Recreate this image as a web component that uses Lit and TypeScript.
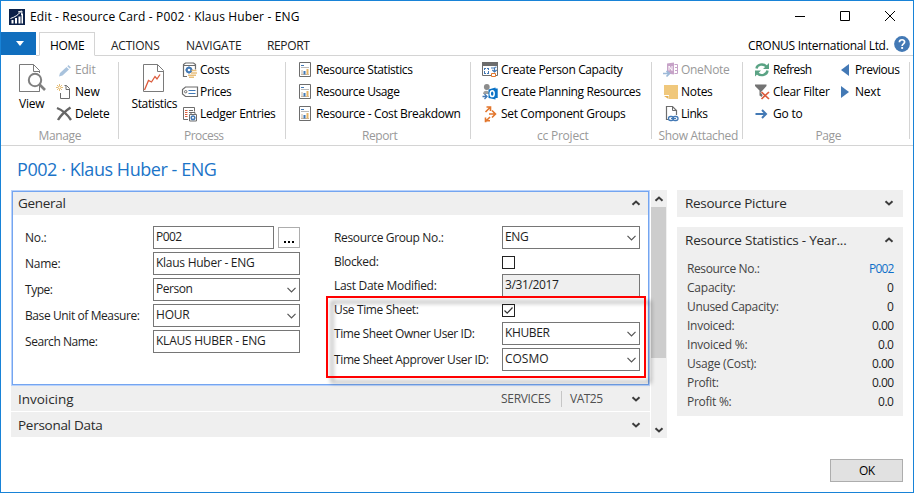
import { LitElement, html, css, svg, nothing } from "lit";
import { customElement, property } from "lit/decorators.js";

/** Single-line text set to a given advance width by adjusting its tracking. */
@customElement("fit-text")
class FitText extends LitElement {
  @property({ type: Number }) w = 0;
  @property() text = "";
  static styles = css`
    :host { display: block; flex: none; white-space: pre; box-sizing: border-box; padding-left: 1px; }
    span { display: inline-block; }
  `;
  render() {
    return html`<span>${this.text}</span>`;
  }
  updated() {
    const s = this.renderRoot.querySelector("span") as HTMLElement;
    s.style.letterSpacing = "0px";
    const natural = s.getBoundingClientRect().width;
    s.style.letterSpacing = `${(this.w - 1.5 - natural) / this.text.length}px`;
    this.style.width = `${this.w}px`;
  }
}

const t = (text: string, w: number, cls = "") =>
  html`<fit-text class=${cls} .text=${text} .w=${w}></fit-text>`;

const G = "#6d6d6d";
const B = "#4379b5";

const report = svg`
  <path d="M1.500 .5h11v14h-11z" fill="#fff" stroke="${G}"/>
  <path d="M3 3.500h3" stroke="#4379b5"/><path d="M3 5.500h8" stroke="#bbb"/>
  <path d="M4 8v4.500M3 12.500h8" stroke="#c9b6a0"/>
  <path d="M5.500 9h2v3.500h-2z" fill="${B}"/>
  <path d="M8.500 7h2v5.500h-2z" fill="#e6b566"/>`;

const icons: Record<string, unknown> = {
  pencil: svg`<path d="M2 14.500l1-3.500 6.500-6 2.500 2.500-6.500 6z" fill="#a9c3dd"/><path d="M10.300 4.200l1.200-1.200 2.400 2.400-1.200 1.200z" fill="#a9c3dd"/>`,
  fresh: svg`<path d="M3.500 9v5.500h9V4.500l-3-3H7.500" fill="none" stroke="${G}"/><path d="M9 1.500v4h3.500" fill="none" stroke="${G}"/>
    <path d="M2.500 0v7M-1 3.500h7M0 1l5 5M5 1L0 6" stroke="#e3b566" stroke-width=".9"/><circle cx="2.500" cy="3.500" r="1.100" fill="#fff"/>`,
  cross: svg`<path d="M0 2C4 3.500 10 8 14 14" fill="none" stroke="#666" stroke-width="2.400"/><path d="M13.500 1.500C9 4.500 4 9 1 14" fill="none" stroke="#666" stroke-width="2.400"/>`,
  costs: svg`<path d="M5 14.500H1.500v-12l2-1.500h8l2 1.500v5" fill="none" stroke="${G}" stroke-width="1.200"/><path d="M2 3.500h11" fill="none" stroke="${G}"/>
    <circle cx="7" cy="8" r="2.300" fill="none" stroke="${B}" stroke-width="2"/><path d="M7 4.500v1.500M7 10v1.500M3.500 8H5M9 8h1.500" stroke="${B}" stroke-width="1.500"/>
    <path d="M9.500 8.500h5M9 11h6M6 13.300h8M7 15.300h5" stroke="#e9bf7c" stroke-width="1.400"/>`,
  prices: svg`<path d="M3.500 3h12v9.500h-12L.5 10V5.500z" fill="#fff" stroke="${G}" stroke-width="1.200"/><circle cx="3.700" cy="7.700" r="1.200" fill="none" stroke="${G}"/>
    <path d="M6.500 6.500h7M6.500 9.500h7" stroke="${B}" stroke-width="1.200"/>`,
  ledger: svg`<path d="M6 13.500H1.500v-12h11v4" fill="none" stroke="${G}"/><path d="M3 4.500h2.500M3 6.500h2.500M3 8.500h2.500M3 10.500h2.500" stroke="#d9603f" stroke-width="1.200"/>
    <path d="M7 4.500h4M7 6.500h3" stroke="${G}"/><path d="M7.500 8.500h7v6.500h-7z" fill="#fff" stroke="${G}"/><path d="M9 8V6.500h4V8" fill="none" stroke="${G}"/>
    <circle cx="11" cy="11.800" r="1.800" fill="none" stroke="${B}" stroke-width="1.500"/>`,
  report,
  capacity: svg`<path d="M-.5 1.500h15v12h-15z" fill="#fff" stroke="${G}"/><path d="M-1 0h16v4H-1z" fill="${G}"/>
    <path d="M1 6.500h5M1 11.500h5M1.500 6v6M5.500 6v6" stroke="${B}" stroke-dasharray="2 1"/><path d="M8 6h3.500v4M9.300 8l2.200 2 2.200-2M11.500 5.500l2-.5" fill="none" stroke="${B}" stroke-width="1.200"/>
    <path d="M8.500 11.500h4v3h-4z" fill="#fff" stroke="#e2762c"/>`,
  planning: svg`<circle cx="3.800" cy="3" r="2.900" fill="#8c8c8c"/><path d="M0 10c0-4.500 6-4.500 7 0z" fill="#a0a0a0"/><path d="M-.5 12.500h4M1.500 10l2.500 2.500L1.500 15" fill="none" stroke="${B}" stroke-width="1.300"/>
    <path d="M5.500 5.500l7-2v12l-7-1.500z" fill="#0a72c6"/><path d="M11 4.500h3.700v9.500H11z" fill="#0a72c6"/><ellipse cx="9.200" cy="9.700" rx="2" ry="2.900" fill="none" stroke="#fff" stroke-width="1.500"/>`,
  groups: svg`<path d="M3.500 1h4v4M7 1.500L2.500 6M3.500 15.500h-1v-4M3 15l4-4M2.500 14.700h4.500M6 8h6M9 4.500L12.500 8 9 11.500" fill="none" stroke="#e2762c" stroke-width="1.600"/>`,
  onenote: svg`<path d="M4 1.500l7-1v12l-7-1z" fill="#c7a3c8"/><path d="M11.500 2.500h3v9h-3" fill="none" stroke="#c7a3c8"/><path d="M12 5.500h3M12 8.500h3" stroke="#c7a3c8"/>
    <path d="M6 8.500V4L9 8.500V4" fill="none" stroke="#fff"/><path d="M0 11.500h6M3.500 9l3 2.500-3 3" fill="none" stroke="#9db9d8" stroke-width="1.700"/>`,
  notes: svg`<path d="M1 1h14v14H6V11H1z" fill="#f0c87c"/><path d="M1 12h4.500v3z" fill="#e3b155"/>`,
  links: svg`<path d="M5 13.500H3.500v-13h6l4 4V9" fill="none" stroke="${G}" stroke-width="1.200"/><path d="M9.500 .5v4h4" fill="none" stroke="${G}"/>
    <rect x="5.500" y="10.500" width="5" height="4" rx="2" fill="none" stroke="${B}" stroke-width="1.300"/><rect x="10" y="10.500" width="5" height="4" rx="2" fill="none" stroke="${B}" stroke-width="1.300"/><path d="M8 12.500h5" stroke="${B}"/>`,
  refresh: svg`<path d="M1.500 6.500C2 2.500 8 1 11.500 4.500M12.500 8.500C12 13 6 14.500 2.500 11.500" fill="none" stroke="#5aa384" stroke-width="2.400"/>
    <path d="M14 1v6H8zM0 14.500v-6h6z" fill="#5aa384"/>`,
  filter: svg`<path d="M0 .5h11.500V2L7.500 6.500v7l-3-2v-5L0 2z" fill="#737373"/><path d="M6.500 7.500l7.500 7.500M14 7.500L6.500 15" stroke="#fff" stroke-width="3"/><path d="M6.500 8l7.500 7M14 8l-7.500 7" stroke="#dc5b3c" stroke-width="1.700"/>`,
  goto: svg`<path d="M.5 8h10M7 4l4 4-4 4" fill="none" stroke="${B}" stroke-width="2"/>`,
  prev: svg`<path d="M12 2v12L4 8z" fill="${B}"/>`,
  next: svg`<path d="M4 2v12l8-6z" fill="${B}"/>`,
};

const icon = (name: string) =>
  html`<svg class="ico" width="16" height="16" viewBox="0 0 16 16">${icons[name]}</svg>`;

const item = (ic: string, label: string, w: number, off = false) =>
  html`<div class="item ${off ? "off" : ""}">${icon(ic)}${t(label, w + 2)}</div>`;

const up = html`<svg class="arr" width="8" height="6" viewBox="0 0 8 6"><path d="M.5 4.800L4 1.500 7.500 4.800" fill="none" stroke="#3c3c3c" stroke-width="2"/></svg>`;
const down = html`<svg class="arr" width="8" height="6" viewBox="0 0 8 6"><path d="M.5 1.200L4 4.500 7.500 1.200" fill="none" stroke="#3c3c3c" stroke-width="2"/></svg>`;
const chev = html`<svg width="9" height="6" viewBox="0 0 9 6"><path d="M.5 .8l4 4 4-4" fill="none" stroke="#555" stroke-width="1.200"/></svg>`;

const field = (kind: string, label: string, lw: number, value: string, vw: number) => html`
  <div class="row ${kind}">
    <div class="lab">${t(label, lw + 2)}</div>
    ${kind.includes("check")
      ? html`<div class="box">${value
          ? html`<svg width="11" height="11" viewBox="0 0 11 11"><path d="M1.500 5.500L4.200 8.200 9.500 2.500" fill="none" stroke="#333" stroke-width="1.200"/></svg>`
          : nothing}</div>`
      : html`<div class="inp">${t(value, vw + 2)}${kind.includes("combo") ? chev : nothing}</div>`}
    ${kind.includes("assist") ? html`<div class="dots"><i></i><i></i><i></i></div>` : nothing}
  </div>`;

const stats: [string, number, string, number][] = [
  ["Resource No.:", 72, "P002", 24],
  ["Capacity:", 48, "0", 6],
  ["Unused Capacity:", 91, "0", 6],
  ["Invoiced:", 47, "0.00", 21],
  ["Invoiced %:", 60, "0.0", 15],
  ["Usage (Cost):", 69, "0.00", 21],
  ["Profit:", 31, "0.00", 21],
  ["Profit %:", 44, "0.0", 15],
];

@customElement("app-root")
class AppRoot extends LitElement {
  static styles = css`
    :host { display: block; font: 12px/16px "Open Sans", "Noto Sans", sans-serif; color: #000; }
    * { box-sizing: border-box; }
    svg { display: block; flex: none; overflow: visible; }
    .win { position: relative; width: 914px; height: 493px; border: 1px solid #1883d7; background: #fff; display: flex; flex-direction: column; overflow: hidden; }
    .title { height: 31px; display: flex; align-items: center; padding-left: 8px; flex: none; }
    .title fit-text { margin-left: 4px; }
    .ctl { display: flex; gap: 35px; margin-left: auto; margin-right: 18px; padding-bottom: 1px; }
    .tabs { height: 24px; display: flex; flex: none; align-items: stretch; }
    .tabs > * { border-bottom: 1px solid #d4d4d4; display: flex; align-items: center; padding-top: 4px; }
    .tabs .file { width: 35px; background: #106ebe; border: 0; justify-content: center; padding: 0 0 1px 2px; height: 23px; }
    .tabs .g { width: 3px; }
    .tabs .home { width: 56px; border: 1px solid #d4d4d4; border-bottom-color: #fff; padding: 3px 0 0 9px; }
    .tabs .act { padding-left: 15px; }
    .tabs .nav { padding-left: 25px; }
    .tabs .rep { padding-left: 24px; }
    .tabs .tab { color: #222; }
    .tabs .fill { flex: 1; justify-content: flex-end; padding-right: 3px; gap: 5px; }
    .tabs .fill svg { margin-top: -2px; }
    .ribbon { height: 90px; border-bottom: 1px solid #d4d4d4; display: flex; flex: none; }
    .grp { display: flex; flex-direction: column; flex: none; padding-top: 3px; border: 0 solid transparent; border-width: 0 1px 0 0;
      border-image: linear-gradient(transparent 7px, #d4d4d4 7px, #d4d4d4 82px, transparent 82px) 1; }
    .cols { display: flex; height: 66px; }
    .cap { color: #999; display: flex; justify-content: center; height: 20px; align-items: center; padding-top: 1px; }
    .big { display: flex; flex-direction: column; align-items: center; padding-top: 5px; gap: 4px; }
    .item { display: flex; height: 22px; align-items: center; gap: 1px; }
    .off { color: #999; }
    .g1 { width: 118px; } .g1 .big { width: 29px; margin-left: 16px; } .g1 .col { margin-left: 11px; }
    .g2 { width: 167px; } .g2 .big { width: 48px; margin-left: 11px; } .g2 .col { margin-left: 4px; } .g2 .cap { padding-left: 3px; }
    .g3 { width: 185px; } .g3 .col { margin-left: 12px; } .g3 .cap { padding-left: 3px; }
    .g4 { width: 181px; } .g4 .col { margin-left: 12px; } .g4 .cap { padding-left: 3px; }
    .g5 { width: 91px; } .g5 .col { margin-left: 11px; } .g5 .cap { padding-left: 2px; }
    .g6 { width: 167px; } .g6 .col { margin-left: 12px; } .g6 .col + .col { margin-left: 7px; } .g6 .cap { padding-left: 4px; }
    .head { color: #1b74c8; font-size: 18px; line-height: 24px; height: 44px; padding: 11px 0 0 15px; flex: none; }
    .body { display: flex; height: 248px; flex: none; padding-left: 10px; }
    .main { width: 639px; height: 247px; flex: none; display: flex; flex-direction: column; }
    .general { height: 196px; border: 1px solid #b9d2fb; flex: none; }
    .gin { height: 194px; border: 1px solid #74a5f0; }
    .bar { height: 25px; background: #efefef; font-size: 13.500px; color: #2b2b2b; display: flex; align-items: center; padding: 0 10px 0 6px; flex: none; }
    .bar .arr { margin-left: auto; }
    .bar.in { height: 23px; padding: 0 8px 1px 4px; }
    .bar + .bar { margin-top: 1px; }
    .bar .sum { margin-left: auto; display: flex; align-items: center; font-size: 12px; color: #505050; }
    .bar .sum i { width: 1px; height: 16px; background: #c6c6c6; margin: 0 7px 0 10px; }
    .bar .sum .arr { margin-left: 29px; }
    .form { display: flex; padding-top: 11px; color: #1e1e1e; }
    .left { width: 287px; margin-left: 11px; }
    .right { width: 307px; margin-left: 22px; }
    .row { display: flex; height: 23px; margin-bottom: 3px; align-items: center; }
    .left .lab { width: 129px; }
    .right .lab { width: 169px; }
    .lab { flex: none; }
    .inp { height: 23px; width: 147px; border: 1px solid #767676; background: #fff; display: flex; align-items: center; justify-content: space-between; padding: 0 3px 1px 1px; flex: none; }
    .inp svg { margin-top: 2px; }
    .right .inp { width: 138px; }
    .assist .inp { width: 121px; }
    .assist .dots { width: 22px; height: 21px; margin-left: 4px; border: 1px solid #adadad; display: flex; gap: 2px; align-items: flex-end; justify-content: center; padding-bottom: 4px; }
    .dots i { width: 2px; height: 2px; background: #000; }
    .box { width: 13px; height: 13px; border: 1px solid #222; }
    .right .check { height: 20px; margin-bottom: 2px; }
    .ro .inp { background: #efefef; }
    .scroll { width: 16px; height: 248px; margin-left: 1px; background: #f0f0f0; display: flex; flex-direction: column; align-items: center; flex: none; justify-content: space-between; padding: 6px 1px 5px 0; }
    .thumb { width: 15px; height: 151px; background: #cdcdcd; margin: 5px 0 auto; flex: none; }
    .side { width: 226px; margin-left: 10px; flex: none; }
    .side .bar { height: 27px; padding: 0 10px 1px 7px; }
    .facts { background: #efefef; height: 189px; margin-top: 10px; }
    .facts .list { padding: 5px 9px 0; color: #444; }
    .facts .ln { display: flex; justify-content: space-between; height: 19px; align-items: center; }
    .facts .v { color: #222; }
    .facts .v.link { color: #0f6fc9; }
    .ok { margin: 21px 10px 0 auto; width: 73px; height: 23px; border: 1px solid #adadad; background: #e1e1e1; display: flex; align-items: center; justify-content: center; flex: none; }
    .mark { position: absolute; left: 325px; top: 295px; width: 320px; height: 82px; border: 2px solid #f00; filter: drop-shadow(5px 5px 2px rgba(0, 0, 0, .4)); }
  `;

  render() {
    return html`<div class="win">
      <div class="title">
        <svg width="16" height="16" viewBox="0 0 16 16"><path d="M0 0h16v16H0z" fill="#0c2149"/><path d="M2.500 11h2v3.500h-2zM6 9h2v5.500H6zM9.500 7.500h2v7h-2zM12.500 4.500h1.500v10h-1.500z" fill="#fff"/><path d="M1.500 9.500C6 8 9 6 11.500 3M9 3l4-1-.5 4" fill="none" stroke="#fff"/></svg>
        ${t("Edit - Resource Card - P002 · Klaus Huber - ENG", 271)}
        <div class="ctl">
          <svg width="10" height="10"><path d="M0 5.500h10" stroke="#000"/></svg>
          <svg width="10" height="10"><path d="M.5 .5h9v9h-9z" fill="none" stroke="#000"/></svg>
          <svg width="10" height="10"><path d="M0 0l10 10M10 0L0 10" stroke="#000"/></svg>
        </div>
      </div>
      <div class="tabs">
        <div class="file"><svg width="8" height="5"><path d="M0 0h8L4 5z" fill="#fff"/></svg></div>
        <div class="g"></div>
        <div class="home">${t("HOME", 36)}</div>
        <div class="tab act">${t("ACTIONS", 50)}</div>
        <div class="tab nav">${t("NAVIGATE", 57)}</div>
        <div class="tab rep">${t("REPORT", 44)}</div>
        <div class="fill">${t("CRONUS International Ltd.", 142)}
          <svg width="16" height="16" viewBox="0 0 16 16"><circle cx="8" cy="7" r="7.900" fill="#4379b5"/><path d="M5.400 5.200C5.500 1.900 10.700 2 10.600 5c0 1.800-2.500 1.900-2.500 4" fill="none" stroke="#fff" stroke-width="1.700"/><path d="M7.200 10h1.900v1.900H7.200z" fill="#fff"/></svg>
        </div>
      </div>
      <div class="ribbon">
        <div class="grp g1">
          <div class="cols">
            <div class="big">
              <svg width="28" height="28" viewBox="0 0 28 28"><path d="M10 27.500H1.500V.5h14l6 6V9M21.500 22v5.500H19" fill="none" stroke="#7a7a7a"/><path d="M1.500 27.500h20" stroke="#7a7a7a"/><path d="M15.500 .5v7h6" fill="none" stroke="#7a7a7a"/><circle cx="17" cy="16" r="6.200" fill="#fff" stroke="#808080" stroke-width="2"/><path d="M21.500 20.500L27 26" stroke="#808080" stroke-width="2.600"/></svg>
              ${t("View", 27)}
            </div>
            <div class="col">${item("pencil", "Edit", 20, true)}${item("fresh", "New", 24)}${item("cross", "Delete", 34)}</div>
          </div>
          <div class="cap">${t("Manage", 44)}</div>
        </div>
        <div class="grp g2">
          <div class="cols">
            <div class="big">
              <svg width="22" height="28" viewBox="0 0 22 28"><path d="M.5 .5h14l6 6v21H.5z" fill="#fff" stroke="#7a7a7a"/><path d="M14.500 .5v7h6" fill="none" stroke="#7a7a7a"/><path d="M1.500 26l4-9.500 3 1.500 3.500-5.500 2 2.500 3-4.500" fill="none" stroke="#dc5b3c" stroke-width="1.300"/></svg>
              ${t("Statistics", 47)}
            </div>
            <div class="col">${item("costs", "Costs", 29)}${item("prices", "Prices", 31)}${item("ledger", "Ledger Entries", 75)}</div>
          </div>
          <div class="cap">${t("Process", 41)}</div>
        </div>
        <div class="grp g3">
          <div class="cols"><div class="col">${item("report", "Resource Statistics", 96)}${item("report", "Resource Usage", 83)}${item("report", "Resource - Cost Breakdown", 144)}</div></div>
          <div class="cap">${t("Report", 37)}</div>
        </div>
        <div class="grp g4">
          <div class="cols"><div class="col">${item("capacity", "Create Person Capacity", 121)}${item("planning", "Create Planning Resources", 139)}${item("groups", "Set Component Groups", 124)}</div></div>
          <div class="cap">${t("cc Project", 53)}</div>
        </div>
        <div class="grp g5">
          <div class="cols"><div class="col">${item("onenote", "OneNote", 48, true)}${item("notes", "Notes", 31)}${item("links", "Links", 26)}</div></div>
          <div class="cap">${t("Show Attached", 81)}</div>
        </div>
        <div class="grp g6">
          <div class="cols">
            <div class="col">${item("refresh", "Refresh", 38)}${item("filter", "Clear Filter", 56)}${item("goto", "Go to", 29)}</div>
            <div class="col">${item("prev", "Previous", 44)}${item("next", "Next", 25)}</div>
          </div>
          <div class="cap">${t("Page", 27)}</div>
        </div>
      </div>
      <div class="head">${t("P002 · Klaus Huber - ENG", 201)}</div>
      <div class="body">
        <div class="main">
          <div class="general"><div class="gin">
            <div class="bar in">${t("General", 49)}${up}</div>
            <div class="form">
              <div class="left">
                ${field("assist", "No.:", 21, "P002", 25)}
                ${field("", "Name:", 35, "Klaus Huber - ENG", 98)}
                ${field("combo", "Type:", 27, "Person", 36)}
                ${field("combo", "Base Unit of Measure:", 114, "HOUR", 33)}
                ${field("", "Search Name:", 72, "KLAUS HUBER - ENG", 109)}
              </div>
              <div class="right">
                ${field("combo", "Resource Group No.:", 109, "ENG", 23)}
                ${field("check", "Blocked:", 44, "", 0)}
                ${field("ro", "Last Date Modified:", 102, "3/31/2017", 53)}
                ${field("check", "Use Time Sheet:", 84, "on", 0)}
                ${field("combo", "Time Sheet Owner User ID:", 140, "KHUBER", 44)}
                ${field("combo", "Time Sheet Approver User ID:", 154, "COSMO", 43)}
              </div>
            </div>
          </div></div>
          <div class="bar">${t("Invoicing", 57)}<div class="sum">${t("SERVICES", 51)}<i></i>${t("VAT25", 34)}${down}</div></div>
          <div class="bar">${t("Personal Data", 86)}${down}</div>
        </div>
        <div class="scroll">${up}<div class="thumb"></div>${down}</div>
        <div class="side">
          <div class="bar">${t("Resource Picture", 103)}${down}</div>
          <div class="facts">
            <div class="bar">${t("Resource Statistics - Year...", 163)}${up}</div>
            <div class="list">${stats.map(
              ([l, lw, v, vw], i) => html`<div class="ln">${t(l, lw + 2)}${t(v, vw + 2, i ? "v" : "v link")}</div>`
            )}</div>
          </div>
        </div>
      </div>
      <div class="ok">${t("OK", 17)}</div>
      <div class="mark"></div>
    </div>`;
  }
}
